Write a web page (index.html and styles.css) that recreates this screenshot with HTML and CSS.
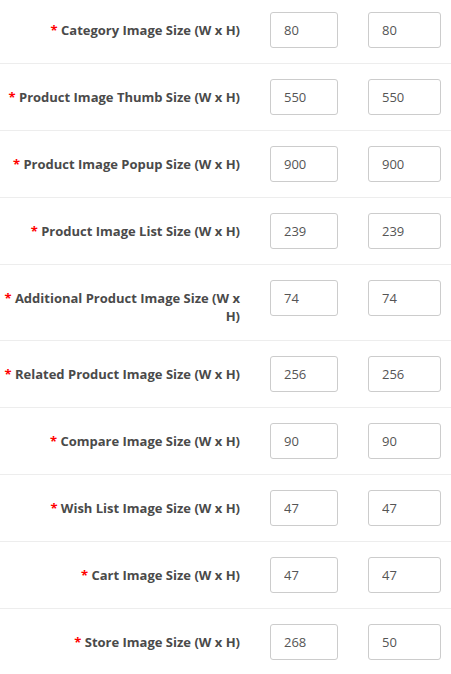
FILE: index.html
```html
<!DOCTYPE html>
<html>
<head>
<meta charset="utf-8">
<link rel="stylesheet" href="styles.css">
</head>
<body>
<div class="form">
  <div class="row"><label class="lbl">Category Image Size (W x H)</label><input class="in w1" value="80"><input class="in w2" value="80"></div>
  <div class="row"><label class="lbl">Product Image Thumb Size (W x H)</label><input class="in w1" value="550"><input class="in w2" value="550"></div>
  <div class="row"><label class="lbl">Product Image Popup Size (W x H)</label><input class="in w1" value="900"><input class="in w2" value="900"></div>
  <div class="row"><label class="lbl">Product Image List Size (W x H)</label><input class="in w1" value="239"><input class="in w2" value="239"></div>
  <div class="row"><label class="lbl">Additional Product Image Size (W x H)</label><input class="in w1" value="74"><input class="in w2" value="74"></div>
  <div class="row"><label class="lbl">Related Product Image Size (W x H)</label><input class="in w1" value="256"><input class="in w2" value="256"></div>
  <div class="row"><label class="lbl">Compare Image Size (W x H)</label><input class="in w1" value="90"><input class="in w2" value="90"></div>
  <div class="row"><label class="lbl">Wish List Image Size (W x H)</label><input class="in w1" value="47"><input class="in w2" value="47"></div>
  <div class="row"><label class="lbl">Cart Image Size (W x H)</label><input class="in w1" value="47"><input class="in w2" value="47"></div>
  <div class="row"><label class="lbl">Store Image Size (W x H)</label><input class="in w1" value="268"><input class="in w2" value="50"></div>
</div>
</body>
</html>
```

FILE: styles.css
```css
html, body {
  margin: 0;
  padding: 0;
  background: #fff;
  overflow: hidden;
}
body {
  font-family: "Open Sans", sans-serif;
  font-size: 12px;
  color: #555;
}
.form {
  margin-top: -4px;
}
.row {
  display: grid;
  grid-template-columns: 240px 68px 73px;
  column-gap: 30px;
  align-items: start;
  padding: 15px 10px 15px 0;
  border-top: 1px solid #ededed;
}
.lbl {
  display: block;
  text-align: right;
  font-weight: bold;
  font-size: 13px;
  line-height: 18px;
  padding-top: 9px;
  color: #4a4a4a;
}
.lbl::before {
  content: "* ";
  color: #f00;
  font-weight: bold;
}
.in {
  box-sizing: border-box;
  width: 100%;
  height: 36px;
  margin: 0;
  padding: 0 13px;
  border: 1px solid #ccc;
  border-radius: 3px;
  font-family: "Open Sans", sans-serif;
  font-size: 13px;
  color: #555;
  background: #fff;
  outline: none;
}
```
